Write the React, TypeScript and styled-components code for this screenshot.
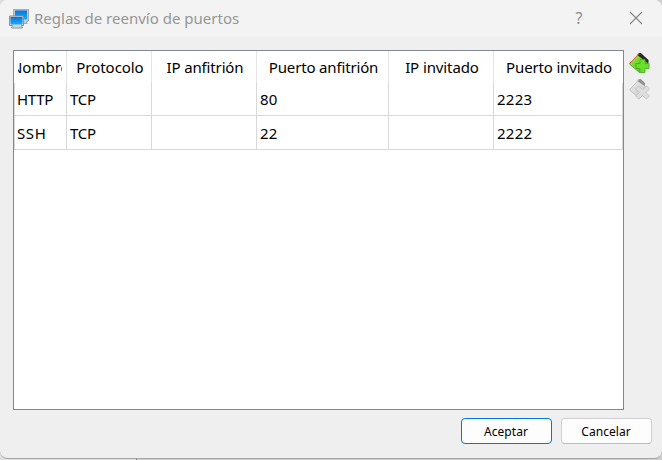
import React from "react";
import styled, { createGlobalStyle, css } from "styled-components";

const GlobalStyle = createGlobalStyle`
  * { box-sizing: border-box; }
  html, body { margin: 0; padding: 0; overflow: hidden; }
  body { background: linear-gradient(90deg, #dedede 0 136px, #6f6f6f 136px 137px, #cecece 137px); }
`;

const Screen = styled.main`
  width: 662px;
  height: 460px;
  font-family: "Noto Sans", "Open Sans", sans-serif;
  font-size: 15px;
  color: #000;
`;

const Dialog = styled.section`
  display: flex;
  flex-direction: column;
  width: 662px;
  height: 459px;
  background: #efefef;
  border-bottom: 1px solid #a6a6a6;
  border-radius: 8px;
  overflow: hidden;
`;

const TitleBar = styled.header`
  display: flex;
  align-items: center;
  flex: none;
  height: 37px;
  padding-left: 9px;
  background: #f3f3f3;
  color: #969696;
`;

const Title = styled.h1`
  flex: 1;
  margin: 0 0 2px 5px;
  font-size: 15px;
  font-weight: 400;
  line-height: 20px;
  letter-spacing: 0.01px;
  white-space: nowrap;
`;

const WindowButton = styled.button<{ $width: number }>`
  display: flex;
  align-items: center;
  justify-content: center;
  width: ${(p) => p.$width}px;
  height: 37px;
  padding: 0 0 2px;
  border: 0;
  background: none;
  color: #8c8c8c;
  font: 16px "Noto Sans", sans-serif;
`;

const CloseButton = styled(WindowButton)`
  padding: 0 0 1px 2px;
`;

const Content = styled.div`
  display: flex;
  gap: 4px;
  padding: 13px 0 0 13px;
`;

const TableFrame = styled.div`
  width: 611px;
  height: 360px;
  border: 1px solid #828790;
  background: #fff;
`;

const Row = styled.div<{ $height: number }>`
  display: grid;
  grid-template-columns: 53px 85px 105px 132px 105px 129px;
  height: ${(p) => p.$height}px;
`;

const cell = css`
  display: flex;
  align-items: center;
  overflow: hidden;
  white-space: nowrap;
  line-height: 20px;
`;

const HeaderCell = styled.div`
  ${cell}
  justify-content: center;
  padding: 0 3px 0 5px;
  border-right: 1px solid #e5e5e5;
  &:first-child { padding: 0 4px; }
  &:last-child { border-right-color: #fff; }
`;

const HeaderLabel = styled.span<{ $spacing: number }>`
  display: flex;
  justify-content: center;
  width: 100%;
  overflow: hidden;
  letter-spacing: ${(p) => p.$spacing}px;
`;

const Cell = styled.div<{ $spacing: number }>`
  ${cell}
  padding-left: 3px;
  border-right: 1px solid #d8d8d8;
  border-bottom: 1px solid #d8d8d8;
  letter-spacing: ${(p) => p.$spacing}px;
  &:first-child { border-left: 1px solid #d8d8d8; padding-left: 2px; }
`;

const Tools = styled.div`
  display: flex;
  flex-direction: column;
  gap: 4px;
  padding-top: 2px;
`;

const ToolButton = styled.button`
  display: flex;
  width: 22px;
  height: 22px;
  padding: 0;
  border: 0;
  background: none;
`;

const Footer = styled.footer`
  display: flex;
  justify-content: flex-end;
  gap: 9px;
  padding: 8px 10px 0 0;
`;

const PushButton = styled.button<{ $primary?: boolean }>`
  width: 91px;
  height: 26px;
  padding: 2px 1px 0 0;
  border: 1px solid ${(p) => (p.$primary ? "#0078d4" : "#d0d0d0")};
  border-bottom-color: ${(p) => (p.$primary ? "#0078d4" : "#bcbcbc")};
  border-radius: 4px;
  background: #fdfdfd;
  color: #000;
  font: 12px/18px "Noto Sans", sans-serif;
  letter-spacing: 0.05px;
`;

function AppIcon() {
  return (
    <svg width="20" height="20" viewBox="0 0 20 20">
      <defs>
        <linearGradient id="screen" x1="0" y1="0" x2="0" y2="1">
          <stop offset="0" stopColor="#0874dc" />
          <stop offset="1" stopColor="#19aefb" />
        </linearGradient>
      </defs>
      <path d="M4.500 .4h15v11.500l-2 1 .8 1.500H6.500l1-2h-3z" fill="#c8cdd1" stroke="#92989c" strokeWidth=".8" />
      <path d="M6 1.500h12v9H6z" fill="url(#screen)" />
      <path d="M.5 7h14v9.500h-2l1 2.500H2.500l1-2.500h-3z" fill="#d2d6d9" stroke="#858b90" strokeWidth=".9" />
      <path d="M1.500 8h12v7.500h-12z" fill="url(#screen)" />
    </svg>
  );
}

function RuleIcon({ kind }: { kind: "add" | "remove" }) {
  const add = kind === "add";
  const id = `diamond-${kind}`;
  return (
    <svg width="22" height="22" viewBox="0 0 22 22">
      <defs>
        <linearGradient id={id} x1="0" y1="0" x2="1" y2="1">
          <stop offset="0" stopColor={add ? "#a0ee4c" : "#eeeeee"} />
          <stop offset="1" stopColor={add ? "#3fb514" : "#c2c2c2"} />
        </linearGradient>
      </defs>
      <path d="M10.500 2 20 11 11.500 20.500 1.500 12z" fill={`url(#${id})`} stroke={add ? "#4ea51c" : "#bcbcbc"} strokeWidth=".8" />
      <path d={add ? "M9.500 2 12.500 .8 20.500 8v3.500L10.500 4z" : "M9.500 2 12.500 .8 17 5v3L10.500 4z"} fill={add ? "#292929" : "#929292"} />
      <path d="M1.500 11.500 10.500 2.500" fill="none" stroke={add ? "#df7540" : "#c4c4c4"} strokeWidth="1" />
      {add ? (
        <path d="M12 7.500h5v4h4v5h-4v4h-5v-4H8v-5h4z" fill="#6ade2b" stroke="#43ac1b" strokeWidth=".8" />
      ) : (
        <path d="m10.500 8 4 3.500L18.500 8 21.500 11l-3.500 3.500 3.500 3.500-3 3-4-3.500-4 3.500-3-3 3.500-3.500L7.500 11z" fill="#dddddd" stroke="#bebebe" strokeWidth=".8" />
      )}
    </svg>
  );
}

const columns = [
  { label: "Nombre", spacing: 0 },
  { label: "Protocolo", spacing: -0.05 },
  { label: "IP anfitrión", spacing: -0.15 },
  { label: "Puerto anfitrión", spacing: -0.16 },
  { label: "IP invitado", spacing: -0.1 },
  { label: "Puerto invitado", spacing: -0.16 },
];

const rules = [
  ["HTTP", "TCP", "", "80", "", "2223"],
  ["SSH", "TCP", "", "22", "", "2222"],
];

const spacingFor = (value: string) => {
  if (/^\d+$/.test(value)) return 0.25;
  return value === "SSH" ? 0.6 : -0.3;
};

export default function App() {
  return (
    <Screen>
      <GlobalStyle />
      <Dialog>
        <TitleBar>
          <AppIcon />
          <Title>Reglas de reenvío de puertos</Title>
          <WindowButton $width={58}>?</WindowButton>
          <CloseButton $width={54} aria-label="Cerrar">
            <svg width="14" height="14" viewBox="0 0 14 14">
              <path d="M1 1l12 12M13 1 1 13" stroke="#858585" strokeWidth="1.100" />
            </svg>
          </CloseButton>
        </TitleBar>
        <Content>
          <TableFrame>
            <Row $height={32}>
              {columns.map((c) => (
                <HeaderCell key={c.label}>
                  <HeaderLabel $spacing={c.spacing}>{c.label}</HeaderLabel>
                </HeaderCell>
              ))}
            </Row>
            {rules.map((rule, i) => (
              <Row key={rule[0]} $height={i === 0 ? 33 : 34}>
                {rule.map((value, j) => (
                  <Cell key={j} $spacing={spacingFor(value)}>{value}</Cell>
                ))}
              </Row>
            ))}
          </TableFrame>
          <Tools>
            <ToolButton aria-label="Agregar regla"><RuleIcon kind="add" /></ToolButton>
            <ToolButton aria-label="Eliminar regla"><RuleIcon kind="remove" /></ToolButton>
          </Tools>
        </Content>
        <Footer>
          <PushButton $primary>Aceptar</PushButton>
          <PushButton>Cancelar</PushButton>
        </Footer>
      </Dialog>
    </Screen>
  );
}
